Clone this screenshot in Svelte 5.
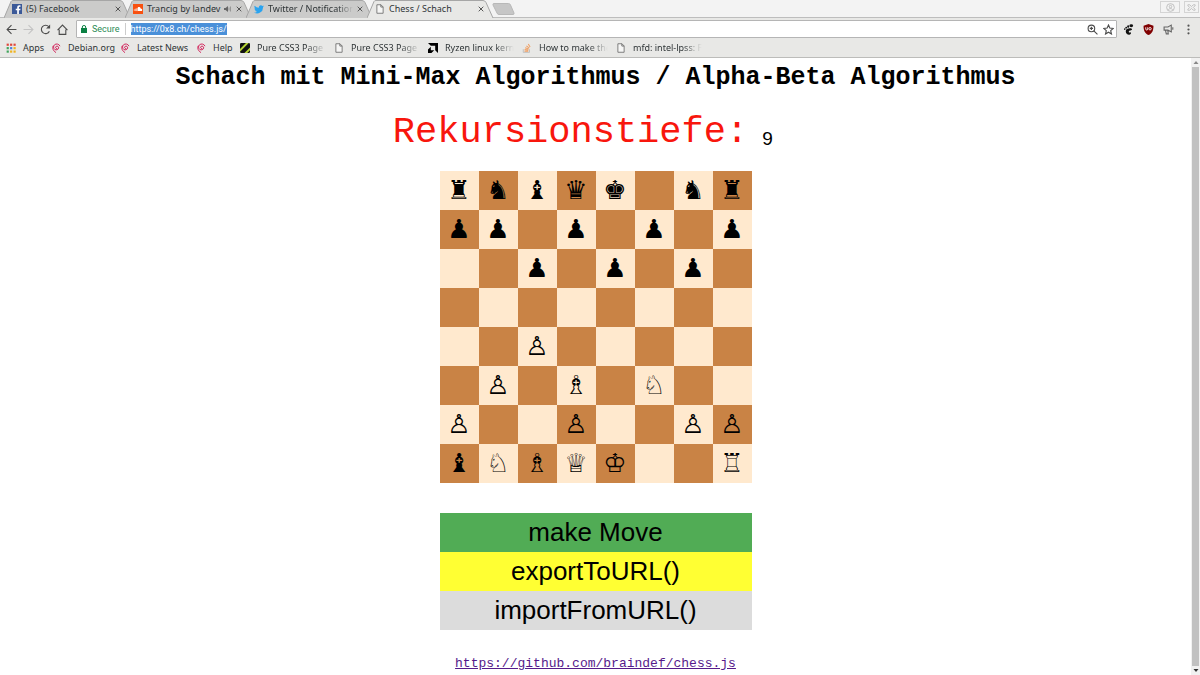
<script>
  const tabs = [
    { title: '(5) Facebook', icon: 'facebook' },
    { title: 'Trancig by landev', icon: 'soundcloud', sound: true },
    { title: 'Twitter / Notification', icon: 'twitter', fade: true },
    { title: 'Chess / Schach', icon: 'page', active: true }
  ];

  const bookmarks = [
    { title: 'Apps', icon: 'apps', width: 45 },
    { title: 'Debian.org', icon: 'debian', width: 69 },
    { title: 'Latest News', icon: 'debian', width: 76 },
    { title: 'Help', icon: 'debian', width: 44 },
    { title: 'Pure CSS3 Page', icon: 'stripes', width: 94 },
    { title: 'Pure CSS3 Page', icon: 'page', width: 94 },
    { title: 'Ryzen linux kern', icon: 'amd', width: 94 },
    { title: 'How to make the', icon: 'stack', width: 94 },
    { title: 'mfd: intel-lpss: F', icon: 'page', width: 94 }
  ];

  const board = [
    '♜♞♝♛♚ ♞♜',
    '♟♟ ♟ ♟ ♟',
    '  ♟ ♟ ♟ ',
    '        ',
    '  ♙     ',
    ' ♙ ♗ ♘  ',
    '♙  ♙  ♙♙',
    '♝♘♗♕♔  ♖'
  ].map((row) => [...row]);

  let depth = $state(9);
  let url = $state('https://0x8.ch/chess.js/');
</script>

{#snippet icon(name)}
  <svg class="icon" viewBox="0 0 16 16" aria-hidden="true">
    {#if name === 'facebook'}
      <rect width="16" height="16" fill="#3b5998" />
      <path d="M11 16V10h2.200l.4-2.600H11V5.800c0-.8.4-1.300 1.400-1.300h1.300V2.200C13.400 2.100 12.600 2 11.800 2 9.600 2 8.300 3.300 8.300 5.500v1.900H6V10h2.300v6z" fill="#fff" />
    {:else if name === 'soundcloud'}
      <rect width="16" height="16" fill="#f8500f" />
      <path d="M8 5.300c1.800-1 4.100.1 4.500 2.300 1.300-.2 2.300.6 2.300 1.800S13.900 11.300 12.800 11.300H8z" fill="#fff" />
      <path d="M2 8.500v2.300M3.700 7.500v3.800M5.400 7v4.300M7 6v5.300" stroke="#fff" stroke-width="1" />
    {:else if name === 'twitter'}
      <path d="M16 3.500c-.6.300-1.200.4-1.900.5.700-.4 1.200-1 1.400-1.800-.6.400-1.300.6-2.100.8A3.300 3.300 0 0 0 7.800 6 9.300 9.300 0 0 1 1.100 2.600 3.300 3.300 0 0 0 2.100 7c-.5 0-1-.2-1.500-.4 0 1.600 1.100 2.900 2.600 3.200-.5.100-1 .2-1.500.1.400 1.300 1.600 2.200 3.100 2.300A6.600 6.600 0 0 1 0 13.500 9.300 9.300 0 0 0 14.400 5.200c.6-.5 1.200-1 1.600-1.700z" fill="#2aa3ef" />
    {:else if name === 'page'}
      <path d="M3 1.200h6.500L13 4.700v10.100H3zM9.300 1.200v3.700H13" fill="#f6f6f5" stroke="#666" stroke-width="1.300" />
    {:else if name === 'apps'}
      {#each ['#e0453a', '#e0453a', '#e0453a', '#3fa45b', '#4a80e0', '#f0b31d', '#3fa45b', '#f0b31d', '#f0b31d'] as fill, i}
        <rect x={1 + (i % 3) * 5.5} y={1 + Math.floor(i / 3) * 5.5} width="3.500" height="3.500" {fill} />
      {/each}
    {:else if name === 'debian'}
      <path d="M9.500 9C7 9 6.500 6.500 8.200 5.400c2-1.200 4.500.3 4 2.800-.5 2.400-3.700 3.600-6 2.200C3.500 8.600 3.400 5 5.600 2.900 8.300.6 12.600 1.300 14.200 4.500M3.300 5C1.800 8.300 3.300 12.500 7.500 15" fill="none" stroke="#d01c55" stroke-width="1.500" stroke-linecap="round" />
    {:else if name === 'stripes'}
      <rect width="16" height="16" rx="2" fill="#111" />
      <path d="M0 9.500 9.500 0H14L0 14zM7 16 16 7v4.500L11.500 16z" fill="#b5d334" />
    {:else if name === 'amd'}
      <path d="M0 0h16v16l-4.500-4.500v-7h-7zM4.500 6v5.500H10L5.500 16H0v-5.500z" fill="#000" />
    {:else if name === 'stack'}
      <path d="M2 10v5h10v-5" fill="none" stroke="#bcbbbb" stroke-width="1.400" />
      <path d="M4 13h6M4.200 10.500l6 .6M5 7.700l5.600 1.900M7 4.500l4.700 3.800M10 1.500l3 5" stroke="#f0a064" stroke-width="1.700" />
    {/if}
  </svg>
{/snippet}

<div class="browser">
  <header>
    <div class="tabstrip">
      {#each tabs as tab}
        <div class="tab" class:active={tab.active} class:fade={tab.fade}>
          <svg class="shape" viewBox="0 0 127 18" preserveAspectRatio="none" aria-hidden="true">
            <path d="M0 18 7 1.500Q7.500.5 9 .5H116Q118 .5 119 2.500L126 18" />
          </svg>
          {@render icon(tab.icon)}
          <span class="label">{tab.title}</span>
          {#if tab.sound}
            <svg class="sound" viewBox="0 0 8 8" aria-hidden="true">
              <path d="M0 3h1.500L4 1v6L1.500 5H0z" fill="#666" />
              <path d="M5 2.500v3M6.500 1.500v5" stroke="#888" stroke-width=".8" />
            </svg>
          {/if}
          <button class="close" aria-label="Close tab">
            <svg viewBox="0 0 6 6"><path d="M.7.7l4.600 4.600M5.300.7.7 5.300" stroke="#555" /></svg>
          </button>
        </div>
      {/each}
      <button class="newtab" aria-label="New tab">
        <svg viewBox="0 0 24 12"><path d="M2 .5h14.500q1.500 0 2 1.500l3.500 8q.4 1.500-1 1.500H7q-1.500 0-2-1.500L1 2Q.6.5 2 .5z" fill="#c6c6c6" stroke="#b8b8b8" /></svg>
      </button>
      <div class="window-buttons">
        <button class="user" aria-label="Profile">
          <svg viewBox="0 0 10 10"><circle cx="5" cy="5" r="4.300" /><circle cx="5" cy="4" r="1.400" /><path d="M2.500 8c.5-2.400 4.500-2.400 5 0" /></svg>
        </button>
        <button aria-label="Close window">
          <svg viewBox="0 0 10 10"><path d="M1 2h2l2 2 2-2h2v1L7 5l2 2v1H7L5 6 3 8H1V7l2-2-2-2z" /></svg>
        </button>
      </div>
    </div>

    <div class="toolbar">
      <button aria-label="Back"><svg viewBox="0 0 10 10"><path d="M9.500 5H1M5 1 1 5l4 4" /></svg></button>
      <button aria-label="Forward" class="faded"><svg viewBox="0 0 10 10"><path d="M.5 5H9M5 1l4 4-4 4" /></svg></button>
      <button aria-label="Reload"><svg viewBox="0 0 10 10"><path d="M8.500 6.500A3.800 3.800 0 1 1 8 2.500" /><path d="M9.200.5v3.700H5.500z" class="solid" /></svg></button>
      <button aria-label="Home"><svg viewBox="0 0 10 10"><path d="M.5 5.500 5 1l4.500 4.500M2 5v4.400h6V5" /></svg></button>
      <div class="omnibox">
        <svg class="lock" viewBox="0 0 6 8" aria-hidden="true"><path d="M0 3h6v5H0z" fill="#0b8043" /><path d="M1.300 3V2a1.700 1.500 0 0 1 3.400 0v1" fill="none" stroke="#0b8043" /></svg>
        <label class="secure" for="address">Secure</label>
        <span class="url"><span class="selection" aria-hidden="true">{url}</span><input id="address" bind:value={url} spellcheck="false" /></span>
        <button aria-label="Zoom"><svg viewBox="0 0 10 10"><circle cx="4" cy="4" r="3" /><path d="m6.200 6.200 3.300 3.300M2.500 4h3M4 2.500v3" /></svg></button>
        <button aria-label="Bookmark this page"><svg viewBox="0 0 10 10"><path d="m5 .9 1.200 2.800 3.100.3L7 6.100l.7 3L5 7.500 2.300 9.100l.7-3L.7 4l3.100-.3z" /></svg></button>
      </div>
      <div class="extensions">
        <button aria-label="GNOME Shell">
          <svg viewBox="0 0 10 10"><g fill="#111" stroke="none"><ellipse cx="7.500" cy="1.600" rx="1.700" ry="1.300" /><ellipse cx="4.700" cy="2.300" rx=".9" ry="1.100" /><ellipse cx="2.900" cy="3.300" rx=".8" ry=".9" /><ellipse cx="1.600" cy="4.600" rx=".7" ry=".8" /><path d="M7.500 4C5 3.600 2.500 4.500 2.500 6.500S4 10 5.800 9.800C7.300 9.500 7.800 8 6.800 7.500c-1 .4-1.700 0-1.500-.7C5.600 5.800 8.200 6 8.200 4.800c0-.5-.3-.7-.7-.8z" /></g></svg>
        </button>
        <button aria-label="uBlock Origin">
          <svg viewBox="0 0 10 10"><path d="M5 0 9.500 1.500C9.600 5.500 8.500 8.500 5 10 1.500 8.500.4 5.500.5 1.500z" fill="#800000" stroke="none" /><path d="M2.500 3v1.500q0 1 .9 1t.9-1V3" stroke="#fff" stroke-width=".8" /><circle cx="6.400" cy="4.300" r="1.100" stroke="#fff" stroke-width=".8" /></svg>
        </button>
        <button aria-label="Notifications">
          <svg viewBox="0 0 10 10"><path d="M1 2.700h3.500L7.500 1v6.200L4.500 5.600H1zM2.200 5.600 3 9h1.800L4.300 5.600M8.900 3v2.200" stroke="#666" stroke-width="1" /></svg>
        </button>
        <button aria-label="Menu">
          <svg viewBox="0 0 10 10"><g fill="#555" stroke="none"><circle cx="5" cy="1.500" r="1" /><circle cx="5" cy="5" r="1" /><circle cx="5" cy="8.500" r="1" /></g></svg>
        </button>
      </div>
    </div>

    <nav class="bookmarks" aria-label="Bookmarks">
      {#each bookmarks as mark}
        <a href="#top" style:width="{mark.width}px" class:cut={mark.width > 80}>
          {@render icon(mark.icon)}
          <span class="label">{mark.title}</span>
        </a>
      {/each}
    </nav>
  </header>

  <div class="viewport">
    <main>
      <h1>Schach mit Mini-Max Algorithmus / Alpha-Beta Algorithmus</h1>
      <div class="depth">
        <label for="depth">Rekursionstiefe:</label>
        <input id="depth" bind:value={depth} />
      </div>
      <table>
        <tbody>
          {#each board as row, r}
            <tr>
              {#each row as piece, c}
                <td class:dark={(r + c) % 2 === 1}>{piece}</td>
              {/each}
            </tr>
          {/each}
        </tbody>
      </table>
      <div class="actions">
        <button class="move">make Move</button>
        <button class="export">exportToURL()</button>
        <button class="import">importFromURL()</button>
      </div>
      <a class="source" href="https://github.com/braindef/chess.js">https://github.com/braindef/chess.js</a>
    </main>
    <div class="scrollbar" aria-hidden="true">
      <svg viewBox="0 0 8 8"><path d="M1.500 5.500 4 2.500l2.500 3z" fill="#888" /></svg>
      <div class="thumb"></div>
      <svg viewBox="0 0 8 8"><path d="M1.500 2.500h5L4 5.500z" fill="#333" /></svg>
    </div>
  </div>
</div>

<style>
  :global(body) {
    margin: 0;
    background: #fff;
  }

  .browser {
    display: flex;
    flex-direction: column;
    min-height: 100vh;
    box-sizing: border-box;
  }

  button {
    padding: 0;
    border: 0;
    background: none;
    font: inherit;
    color: inherit;
  }

  svg {
    display: block;
    flex: none;
  }

  header {
    background: #e8e8e6;
    border-bottom: 1px solid #bcbcba;
    font-family: "Noto Sans", "Open Sans", sans-serif;
    font-size: 9px;
    line-height: 12px;
    color: #2e3436;
  }

  .icon {
    width: 10px;
    height: 10px;
  }

  .label {
    flex: 1;
    min-width: 0;
    white-space: nowrap;
  }

  .tabstrip {
    display: flex;
    height: 18px;
    padding-left: 4px;
    background: #f3f3f3;
    box-shadow: inset 0 -1px #bdbdbd;
  }

  .tab {
    position: relative;
    display: flex;
    align-items: center;
    flex: 0 1 127px;
    gap: 4px;
    min-width: 0;
    height: 18px;
    margin-right: -6px;
    padding: 0 10px 0 8px;
    box-sizing: border-box;
  }

  .tab > * {
    position: relative;
  }

  .tab .shape {
    position: absolute;
    inset: 0;
    width: 100%;
    height: 100%;
    fill: #cbcbca;
    stroke: #a6a6a6;
  }

  .tab.active {
    z-index: 1;
  }

  .tab.active .shape {
    fill: #e8e8e6;
  }

  .fade .label {
    mask-image: linear-gradient(to left, transparent, #000 16px);
  }

  .sound {
    width: 8px;
    height: 8px;
  }

  .close svg {
    width: 6px;
    height: 6px;
  }

  .newtab {
    align-self: center;
    margin-left: 4px;
  }

  .newtab svg {
    width: 24px;
    height: 12px;
  }

  .window-buttons {
    display: flex;
    gap: 4px;
    margin: 1px 1px 5px auto;
  }

  .window-buttons button {
    display: grid;
    place-items: center;
    width: 15px;
    border: 1px solid #d4d4d4;
    box-sizing: border-box;
  }

  .window-buttons .user {
    width: 20px;
  }

  .window-buttons svg {
    width: 9px;
    height: 9px;
    fill: none;
    stroke: #bbb;
  }

  .toolbar {
    display: flex;
    align-items: center;
    gap: 6px;
    padding: 2px 6px 0;
  }

  .toolbar button {
    fill: none;
    stroke: #4c4c4c;
    stroke-width: 1;
  }

  .toolbar button svg {
    width: 11px;
    height: 11px;
  }

  .toolbar .faded {
    stroke: #c4c4c4;
  }

  .solid {
    fill: #4c4c4c;
    stroke: none;
  }

  .omnibox {
    display: flex;
    align-items: center;
    flex: 1;
    gap: 5px;
    height: 18px;
    margin-left: 2px;
    padding: 0 2px 0 4px;
    border: 1px solid #b5b5b5;
    border-radius: 1px;
    background: #fff;
    box-sizing: border-box;
    font-family: Roboto, sans-serif;
  }

  .lock {
    width: 6px;
    height: 8px;
  }

  .secure {
    padding-right: 5px;
    border-right: 1px solid #ccc;
    color: #2b8a55;
  }

  .url {
    position: relative;
    flex: 1;
    height: 12px;
  }

  .selection {
    display: inline-block;
    background: #4a90d9;
    color: transparent;
  }

  .url input {
    position: absolute;
    inset: 0;
    width: 100%;
    height: 12px;
    padding: 0;
    border: 0;
    outline: 0;
    background: none;
    font: inherit;
    color: #fff;
  }

  .extensions {
    display: flex;
    gap: 9px;
  }

  .bookmarks {
    display: flex;
    align-items: center;
    height: 19px;
    padding-left: 6px;
  }

  .bookmarks a {
    display: flex;
    align-items: center;
    gap: 7px;
    color: inherit;
    text-decoration: none;
  }

  .bookmarks .cut {
    padding-right: 8px;
    box-sizing: border-box;
  }

  .cut .label {
    mask-image: linear-gradient(to left, transparent, #000 20px);
  }

  .viewport {
    display: flex;
    flex: 1;
  }

  main {
    display: flex;
    flex-direction: column;
    align-items: center;
    flex: 1;
    font-family: "Liberation Mono", monospace;
    color: #000;
  }

  h1 {
    margin: 5px 0 18px;
    font-size: 25px;
    line-height: 30px;
  }

  .depth {
    display: flex;
    align-items: flex-end;
    gap: 14px;
    margin-bottom: 18px;
  }

  .depth label {
    font-size: 37px;
    line-height: 42px;
    color: #f8160d;
  }

  .depth input {
    width: 36px;
    height: 28px;
    padding: 0;
    border: 0;
    background: none;
    font: 19px "Liberation Sans", sans-serif;
  }

  table {
    border-spacing: 0;
    font: 26px/39px "DejaVu Sans", sans-serif;
    text-align: center;
  }

  td {
    width: 39px;
    height: 39px;
    padding: 0;
    background: #ffe9ce;
  }

  .dark {
    background: #c98345;
  }

  .actions {
    display: grid;
    width: 312px;
    margin: 30px 0 25px;
    font: 26px/39px "Liberation Sans", sans-serif;
  }

  .move {
    background: #51ac55;
  }

  .export {
    background: #ffff33;
  }

  .import {
    background: #dcdcdc;
  }

  .source {
    font-size: 13px;
    line-height: 18px;
    color: #551a8b;
  }

  .scrollbar {
    display: flex;
    flex-direction: column;
    align-items: center;
    width: 9px;
    background: #f1f1f1;
  }

  .scrollbar svg {
    width: 8px;
    height: 9px;
  }

  .thumb {
    flex: 1;
    width: 7px;
    background: #c1c1c1;
  }
</style>
